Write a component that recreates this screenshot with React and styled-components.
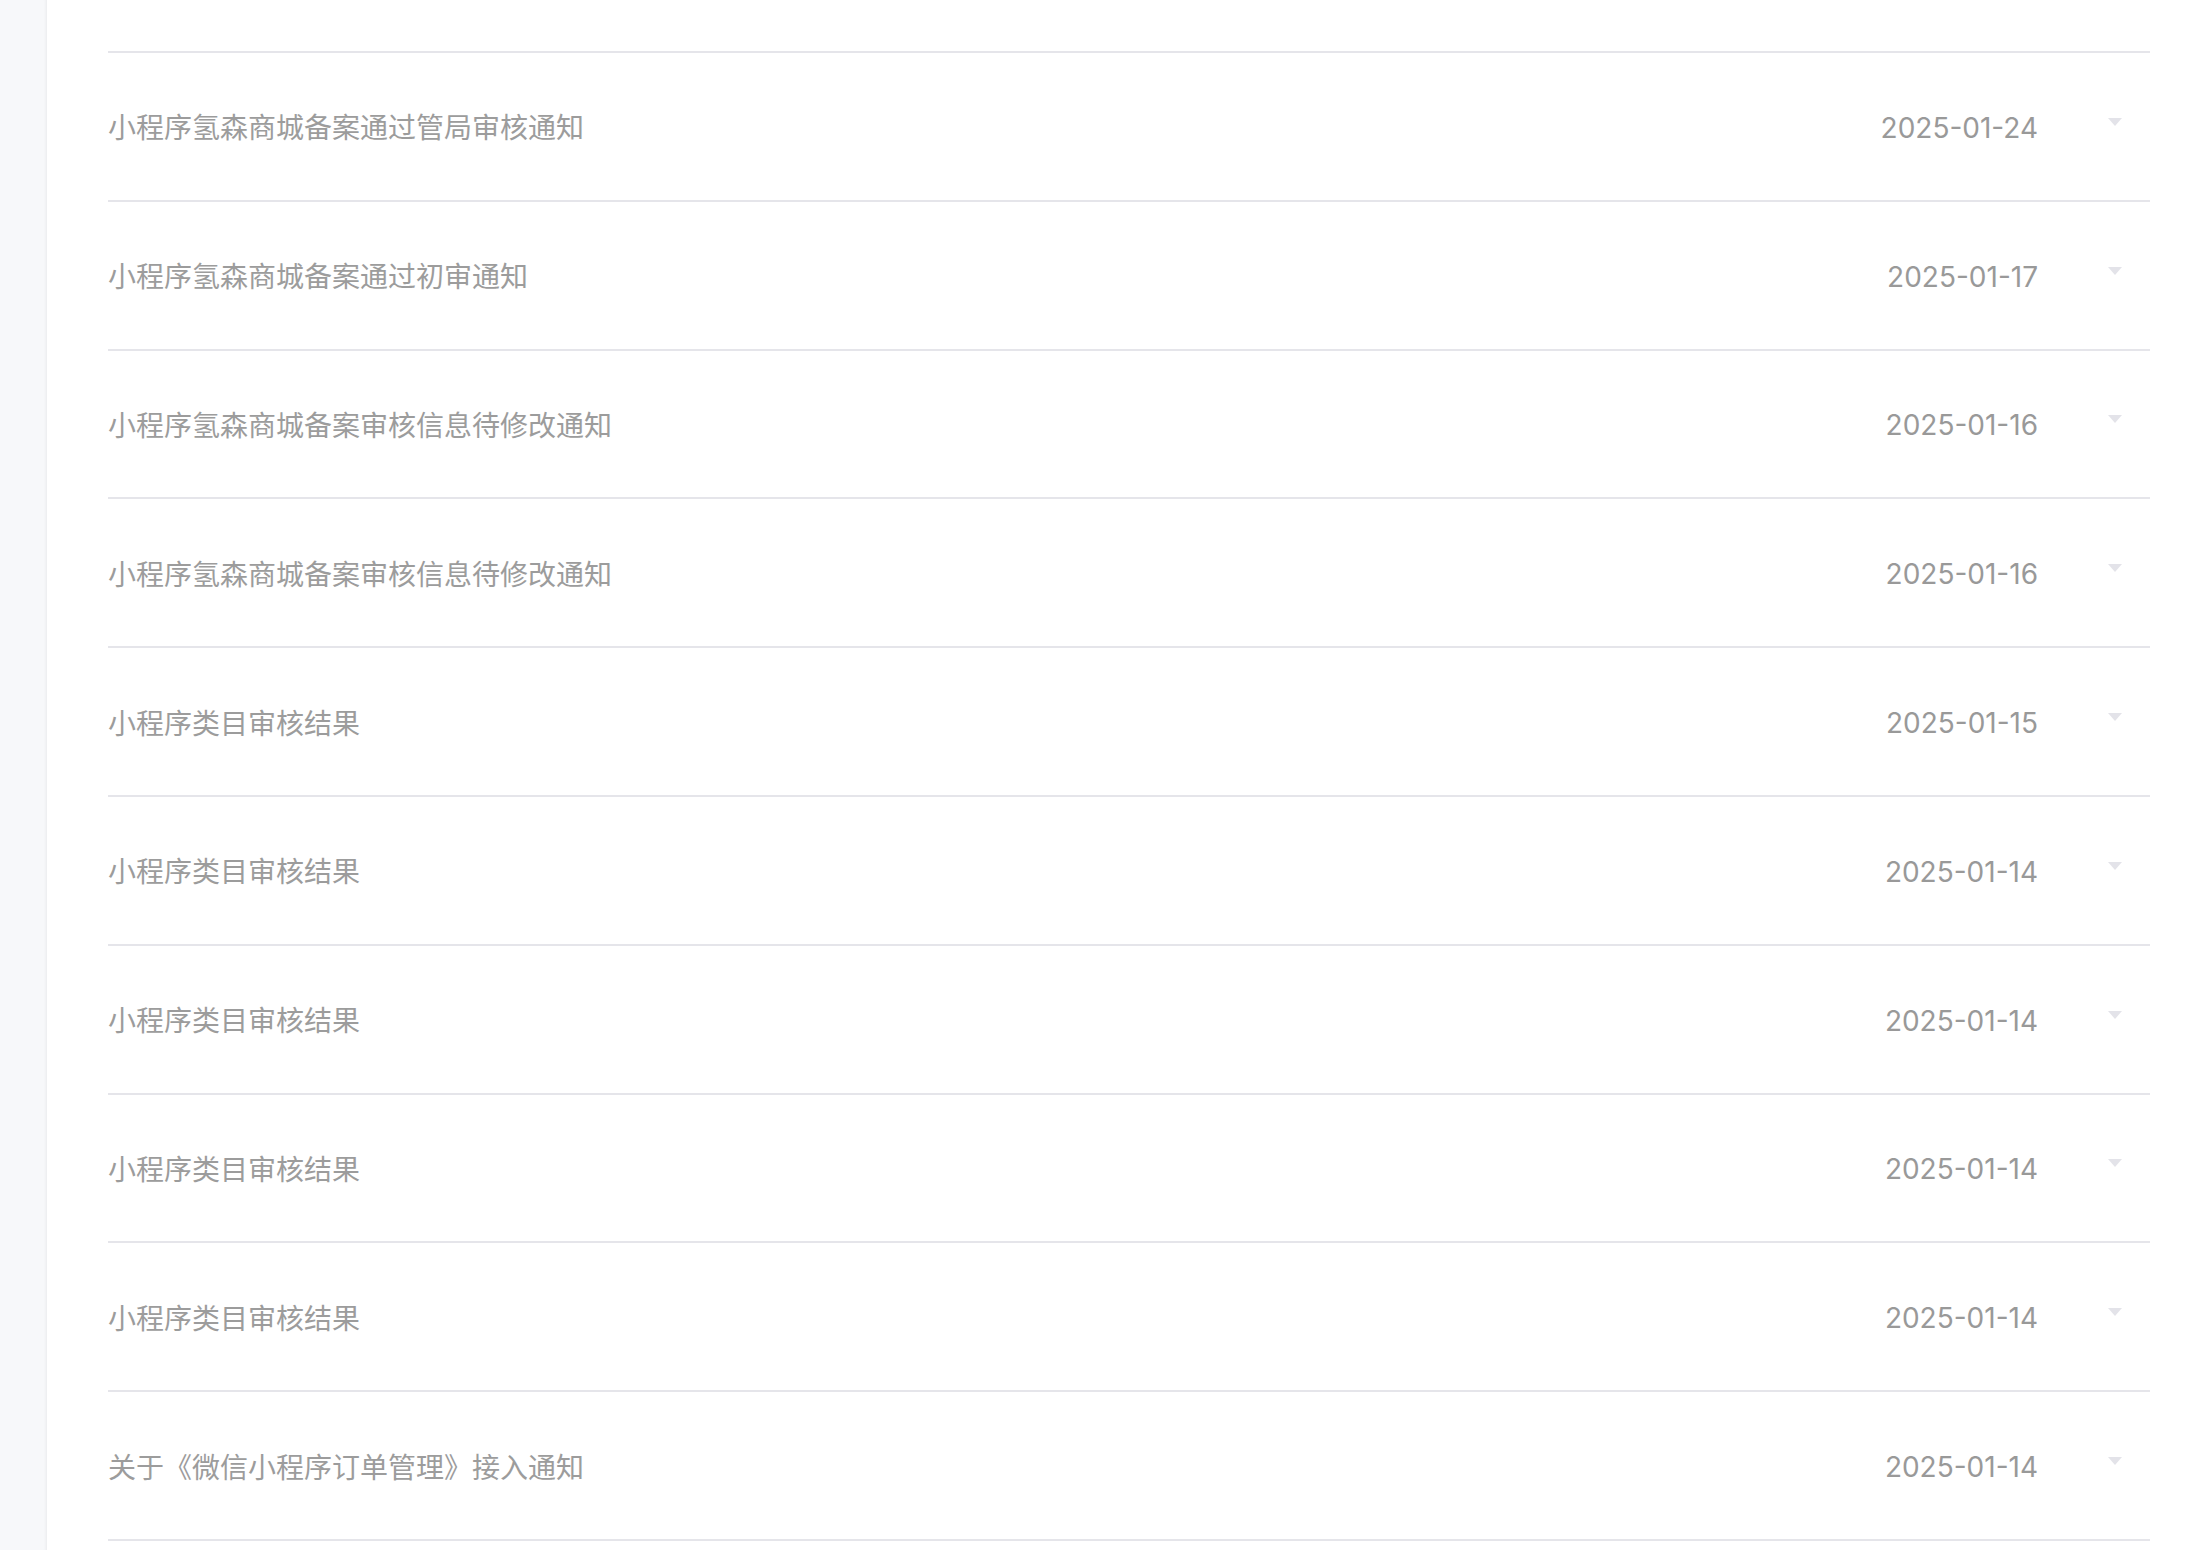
import React from "react";
import styled, { createGlobalStyle } from "styled-components";

const notices = [
  { title: "小程序氢森商城备案通过管局审核通知", date: "2025-01-24" },
  { title: "小程序氢森商城备案通过初审通知", date: "2025-01-17" },
  { title: "小程序氢森商城备案审核信息待修改通知", date: "2025-01-16" },
  { title: "小程序氢森商城备案审核信息待修改通知", date: "2025-01-16" },
  { title: "小程序类目审核结果", date: "2025-01-15" },
  { title: "小程序类目审核结果", date: "2025-01-14" },
  { title: "小程序类目审核结果", date: "2025-01-14" },
  { title: "小程序类目审核结果", date: "2025-01-14" },
  { title: "小程序类目审核结果", date: "2025-01-14" },
  { title: "关于《微信小程序订单管理》接入通知", date: "2025-01-14" },
];

const GlobalStyle = createGlobalStyle`
  html, body {
    margin: 0;
    padding: 0;
    background: #ffffff;
  }
  * {
    box-sizing: border-box;
  }
`;

const Page = styled.div`
  display: flex;
  height: 1550px;
  overflow: hidden;
  background: #ffffff;
`;

const Sidebar = styled.aside`
  width: 47px;
  flex-shrink: 0;
  background: #f7f8fa;
  box-shadow: inset -3px 0 3px -2px rgba(0, 0, 0, 0.06);
`;

const Main = styled.main`
  flex: 1;
  padding: 0 60px 0 61px;
`;

const List = styled.ul`
  list-style: none;
  margin: 0;
  padding: 0;
`;

// tail of the row above, scrolled out of view
const ClippedRow = styled.li`
  height: 53px;
  border-bottom: 2px solid #e5e5ea;
`;

const Row = styled.li`
  display: flex;
  align-items: center;
  height: 148.8px;
  border-bottom: 2px solid #e5e5ea;
`;

const Title = styled.span`
  flex: 1;
  font-family: "Noto Sans CJK SC", "Noto Sans", sans-serif;
  font-size: 28px;
  color: #9c9c9c;
  white-space: nowrap;
`;

const Date = styled.span`
  padding-top: 3px;
  font-family: Inter, "Noto Sans", sans-serif;
  font-size: 28px;
  color: #999999;
  text-align: right;
`;

const Caret = styled.i`
  width: 0;
  height: 0;
  margin: 0 28px 9px 70px;
  border-left: 7.5px solid transparent;
  border-right: 7.5px solid transparent;
  border-top: 8px solid #e3e3e9;
`;

const App = () => {
  return (
    <Page>
      <GlobalStyle />
      <Sidebar />
      <Main>
        <List>
          <ClippedRow />
          {notices.map((n, i) => (
            <Row key={i}>
              <Title>{n.title}</Title>
              <Date>{n.date}</Date>
              <Caret />
            </Row>
          ))}
        </List>
      </Main>
    </Page>
  );
};

export default App;
